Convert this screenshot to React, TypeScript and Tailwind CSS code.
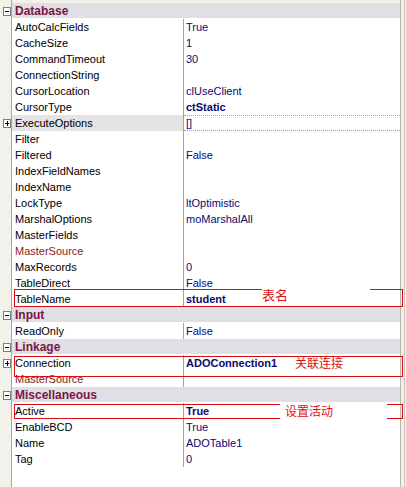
import React from "react";

type Row = {
  name: string;
  value?: string;
  cat?: boolean;
  bold?: boolean;
  plus?: boolean;
  grey?: boolean;
  red?: boolean;
};

const rows: Row[] = [
  { name: "Database", cat: true },
  { name: "AutoCalcFields", value: "True" },
  { name: "CacheSize", value: "1" },
  { name: "CommandTimeout", value: "30" },
  { name: "ConnectionString" },
  { name: "CursorLocation", value: "clUseClient" },
  { name: "CursorType", value: "ctStatic", bold: true },
  { name: "ExecuteOptions", value: "[]", plus: true, grey: true },
  { name: "Filter" },
  { name: "Filtered", value: "False" },
  { name: "IndexFieldNames" },
  { name: "IndexName" },
  { name: "LockType", value: "ltOptimistic" },
  { name: "MarshalOptions", value: "moMarshalAll" },
  { name: "MasterFields" },
  { name: "MasterSource", red: true },
  { name: "MaxRecords", value: "0" },
  { name: "TableDirect", value: "False" },
  { name: "TableName", value: "student", bold: true },
  { name: "Input", cat: true },
  { name: "ReadOnly", value: "False" },
  { name: "Linkage", cat: true },
  { name: "Connection", value: "ADOConnection1", bold: true, plus: true },
  { name: "MasterSource", red: true },
  { name: "Miscellaneous", cat: true },
  { name: "Active", value: "True", bold: true },
  { name: "EnableBCD", value: "True" },
  { name: "Name", value: "ADOTable1" },
  { name: "Tag", value: "0" },
];

const Toggle = ({ open }: { open: boolean }) => (
  <div className="relative w-[9px] h-[9px] border border-[#808080] bg-white">
    <div className="absolute left-[1px] right-[1px] top-[3px] h-px bg-black" />
    {!open && <div className="absolute top-[1px] bottom-[1px] left-[3px] w-px bg-black" />}
  </div>
);

const cjk = { fontFamily: '"Noto Sans CJK SC", sans-serif' };

const App: React.FC = () => {
  return (
    <div
      className="relative w-[406px] h-[487px] bg-[#f3f2ea] flex text-[11px] overflow-hidden"
      style={{ fontFamily: '"Liberation Sans", Arial, sans-serif' }}
    >
      {/* gutter */}
      <div className="w-[12px] flex flex-col pt-[3px] border-r border-[#a6a6a6]">
        {rows.map((r, i) => (
          <div key={i} className="h-[16px] flex items-center pl-[3px]">
            {(r.cat || r.plus) && <Toggle open={!!r.cat} />}
          </div>
        ))}
      </div>

      {/* list */}
      <div className="flex-1 flex flex-col pt-[3px] bg-[#f3f2ea]">
        <div className="flex-1 bg-white flex flex-col">
          {rows.map((r, i) =>
            r.cat ? (
              <div
                key={i}
                className="h-[16px] leading-[16px] bg-[#e0dfe3] pl-[3px] font-bold text-[12px] text-[#7a1646] border-b border-white"
              >
                {r.name}
              </div>
            ) : (
              <div key={i} className="h-[16px] leading-[16px] flex">
                <div
                  className={`w-[172px] pl-[3px] border-r border-[#a0a0a0] ${
                    r.grey ? "bg-[#e4e4e4]" : ""
                  } ${r.red ? "text-[#8b1a1a]" : "text-black"}`}
                >
                  {r.name}
                </div>
                <div
                  className={`flex-1 pl-[2px] text-[#0a0a6e] ${r.bold ? "font-bold" : ""} ${
                    r.grey ? "border-y border-dotted border-[#a0a0a0] leading-[14px]" : ""
                  }`}
                >
                  {r.value}
                </div>
              </div>
            )
          )}
        </div>
      </div>

      {/* right frame */}
      <div className="w-[6px] border-l border-[#b8b8b0] flex">
        <div className="w-[3px]" />
        <div className="w-px bg-[#c8c6bc]" />
      </div>

      {/* annotations */}
      <div className="absolute left-[14px] top-[289px] w-[389px] h-[18px] border border-[#d81010]" />
      <div
        className="absolute left-[262px] top-[287px] w-[108px] h-[16px] bg-white text-[#e01010] text-[13px] leading-[16px]"
        style={cjk}
      >
        表名
      </div>

      <div className="absolute left-[14px] top-[356px] w-[389px] h-[21px] border border-[#d81010]" />
      <div
        className="absolute left-[295px] top-[355px] text-[#e01010] text-[12px] leading-[16px]"
        style={cjk}
      >
        关联连接
      </div>

      <div className="absolute left-[14px] top-[404px] w-[389px] h-[15px] border border-[#d81010]" />
      <div
        className="absolute left-[280px] top-[404px] w-[107px] h-[16px] bg-white pl-[5px] text-[#e01010] text-[12px] leading-[14px]"
        style={cjk}
      >
        设置活动
      </div>
    </div>
  );
};

export default App;
